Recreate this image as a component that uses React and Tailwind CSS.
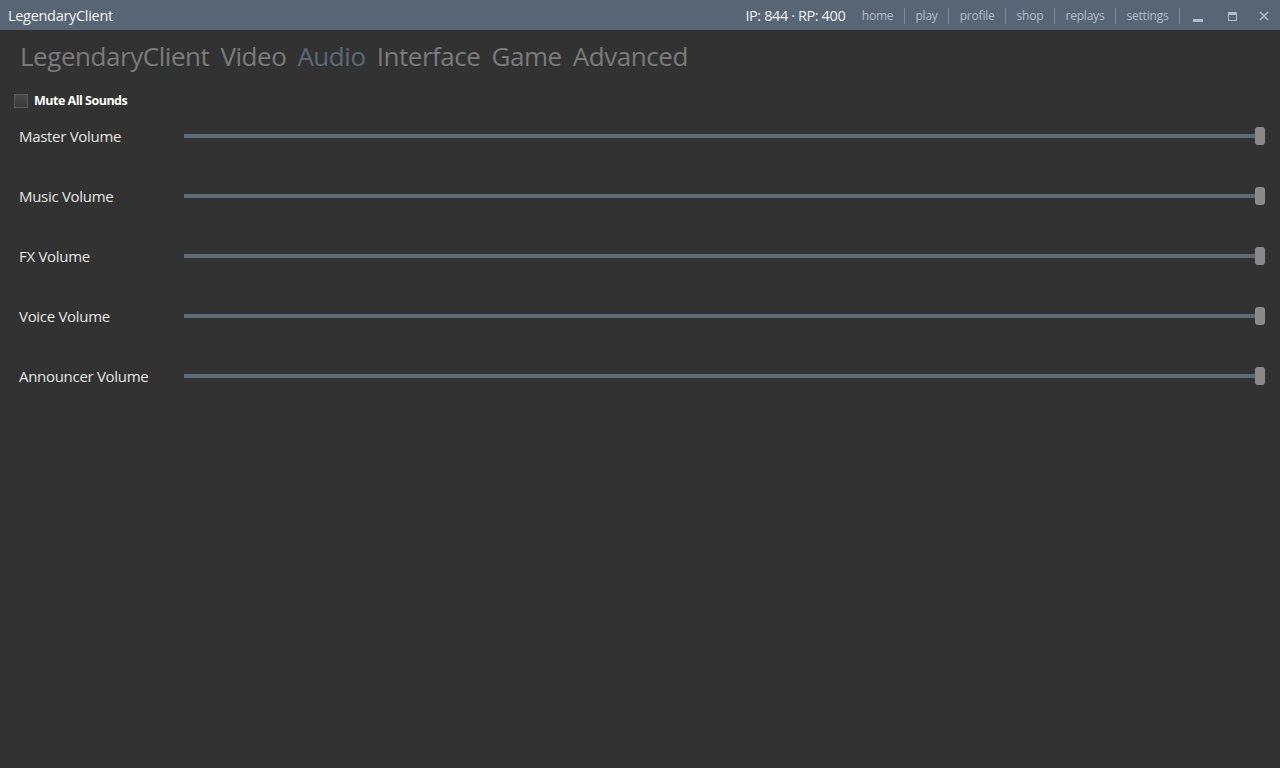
import React, { useState } from 'react';

const font = { fontFamily: '"Open Sans", "Noto Sans", sans-serif' };

const navItems = ['home', 'play', 'profile', 'shop', 'replays', 'settings'];
const tabs = ['LegendaryClient', 'Video', 'Audio', 'Interface', 'Game', 'Advanced'];
const sliders = ['Master Volume', 'Music Volume', 'FX Volume', 'Voice Volume', 'Announcer Volume'];

const VolumeRow = ({ label }) => (
  <div className="flex items-center h-[60px]">
    <div className="w-[184px] pl-[19px] text-[15px] text-[#e6e6e6] tracking-[-0.3px]">{label}</div>
    <div className="flex-1 flex items-center pr-[15px]">
      <div className="flex-1 h-[4px] bg-[#5f6c78]" />
      <div className="w-[10px] h-[18px] rounded-[3px] bg-[#8a8a8a] -ml-[2px]" />
    </div>
  </div>
);

export default function App() {
  const [muted, setMuted] = useState(false);

  return (
    <div className="w-[1280px] h-[768px] flex flex-col bg-[#323232] overflow-hidden" style={font}>
      {/* Title bar */}
      <div className="h-[30px] pt-[2px] bg-[#576574] flex items-center shrink-0">
        <div className="pl-[8px] text-[14.5px] text-[#f2f4f6] tracking-[-0.3px]">LegendaryClient</div>
        <div className="flex-1" />
        <div className="text-[14.5px] text-[#eef1f4] tracking-[-0.4px] mr-[6px]">IP: 844 · RP: 400</div>
        {navItems.map((n) => (
          <React.Fragment key={n}>
            <span className="text-[12px] text-[#b4bdc7] px-[10.5px] tracking-[-0.2px]">{n}</span>
            <span className="w-px h-[16px] bg-[#7f8b97]" />
          </React.Fragment>
        ))}
        <div className="w-[36px] flex justify-center items-end h-[12px]">
          <div className="w-[10px] h-[3px] bg-[#b4bdc7]" />
        </div>
        <div className="w-[32px] flex justify-center">
          <div className="w-[9px] h-[9px] border border-[#b4bdc7] border-t-[3px]" />
        </div>
        <div className="w-[32px] flex justify-center text-[#b4bdc7]">
          <svg width="10" height="10" viewBox="0 0 10 10">
            <path d="M1 1 L9 9 M9 1 L1 9" stroke="currentColor" strokeWidth="1.6" />
          </svg>
        </div>
      </div>

      {/* Tabs heading */}
      <div className="flex items-center gap-[11px] pl-[20px] pt-[2px] h-[50px]">
        {tabs.map((t) => (
          <span
            key={t}
            className={`text-[26px] tracking-[-0.45px] ${t === 'Audio' ? 'text-[#5a6a7b]' : 'text-[#7b7b7b]'}`}
          >
            {t}
          </span>
        ))}
      </div>

      {/* Mute */}
      <label className="flex items-center mt-[11px] pl-[14px] h-[20px] cursor-pointer" onClick={() => setMuted(!muted)}>
        <div className="w-[14px] h-[14px] border border-[#5a5a5a] bg-gradient-to-b from-[#4a4a4a] to-[#3a3a3a] flex items-center justify-center text-[10px] text-white">
          {muted ? '✓' : ''}
        </div>
        <span className="ml-[6px] text-[12.5px] font-bold text-white tracking-[-0.5px]">Mute All Sounds</span>
      </label>

      {/* Volume sliders */}
      <div className="-mt-[5px] flex flex-col">
        {sliders.map((s) => (
          <VolumeRow key={s} label={s} />
        ))}
      </div>
    </div>
  );
}
